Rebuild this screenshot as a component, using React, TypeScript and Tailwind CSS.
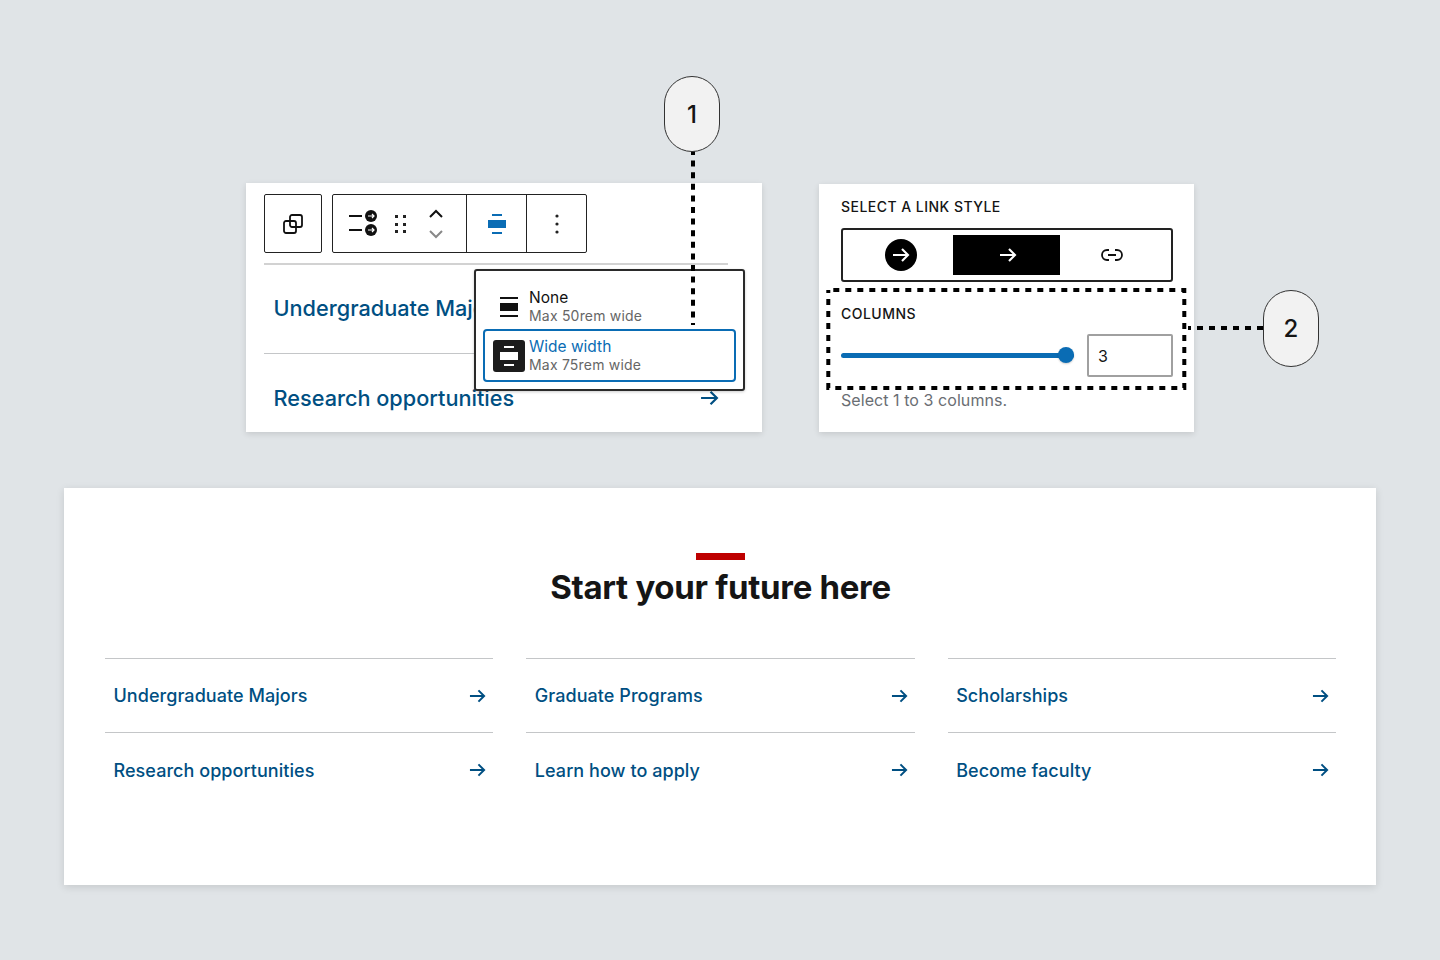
import React from 'react';

const links = [
  'Undergraduate Majors',
  'Graduate Programs',
  'Scholarships',
  'Research opportunities',
  'Learn how to apply',
  'Become faculty',
];

const Arrow = ({ className }: { className?: string }) => (
  <svg viewBox="0 0 18 16" fill="none" stroke="currentColor" strokeWidth="2.1" className={className}>
    <path d="M1 8h15M10 2l6 6-6 6" />
  </svg>
);

const LinkRow = ({ label }: { label: string }) => (
  <div className="flex h-[74.4px] items-center justify-between border-t border-[#c4c6c8] pl-[8.5px] pr-[7px]">
    <span className="text-[18px] font-medium tracking-[0.05px] text-[#004f82]">{label}</span>
    <Arrow className="h-[16px] w-[17px] text-[#004f82]" />
  </div>
);

const ToolbarIcons = () => (
  <svg viewBox="0 0 134 58" className="h-[58px] w-[134px]" fill="none">
    <path d="M16 21h13M16 35h13" stroke="#111" strokeWidth="2" />
    <circle cx="38" cy="21" r="6" fill="#111" />
    <circle cx="38" cy="35" r="6" fill="#111" />
    <path d="M35 21h6M39 19l2 2-2 2M35 35h6M39 33l2 2-2 2" stroke="#fff" strokeWidth="1.2" />
    <g fill="#222">
      <rect x="62" y="20" width="3" height="3" />
      <rect x="70" y="20" width="3" height="3" />
      <rect x="62" y="28" width="3" height="3" />
      <rect x="70" y="28" width="3" height="3" />
      <rect x="62" y="35" width="3" height="3" />
      <rect x="70" y="35" width="3" height="3" />
    </g>
    <path d="M97 22l6-6 6 6" stroke="#111" strokeWidth="2" />
    <path d="M97 36l6 6 6-6" stroke="#888" strokeWidth="2" />
  </svg>
);

const App: React.FC = () => {
  return (
    <div className="relative h-[960px] w-full overflow-hidden bg-[#e0e4e7] pt-[183px] font-[Inter,sans-serif] text-[#151515]">
      {/* Top panels */}
      <div className="flex items-start gap-[57px] pl-[246px]">
        {/* Block toolbar panel */}
        <div className="relative h-[249px] w-[516px] overflow-hidden bg-white px-[18px] pt-[11px] shadow-[0_2px_6px_rgba(0,0,0,0.12)]">
          <div className="flex gap-[10px]">
            <div className="flex h-[59px] w-[58px] items-center justify-center rounded-[2px] border border-[#222]">
              <svg viewBox="0 0 20 20" fill="none" stroke="#111" strokeWidth="1.8" className="h-[20px] w-[20px]">
                <rect x="1" y="7" width="12" height="12" rx="2" />
                <rect x="7" y="1" width="12" height="12" rx="2" />
              </svg>
            </div>
            <div className="flex h-[59px] w-[255px] rounded-[2px] border border-[#222]">
              <div className="w-[134px] border-r border-[#222]">
                <ToolbarIcons />
              </div>
              <div className="flex w-[60px] items-center justify-center border-r border-[#222]">
                <svg viewBox="0 0 18 20" className="h-[20px] w-[18px]" fill="#0a6cb4">
                  <rect x="4" y="0" width="10" height="2" />
                  <rect x="0" y="6" width="18" height="8" />
                  <rect x="4" y="18" width="10" height="2" />
                </svg>
              </div>
              <div className="flex flex-1 items-center justify-center">
                <svg viewBox="0 0 4 20" className="h-[20px] w-[4px]" fill="#222">
                  <circle cx="2" cy="2" r="1.6" />
                  <circle cx="2" cy="10" r="1.6" />
                  <circle cx="2" cy="18" r="1.6" />
                </svg>
              </div>
            </div>
          </div>
          <div className="mt-[10px] w-[464px] border-t-2 border-[#d2d2d2]" />
          <div className="flex h-[88px] items-center pb-[2px] pl-[9.5px] text-[21.7px] font-medium text-[#004f82]">
            Undergraduate Majors
          </div>
          <div className="w-[464px] border-t border-[#c4c6c8]" />
          <div className="flex h-[88px] items-center justify-between pl-[9.5px] pr-[25px] text-[21.7px] font-medium text-[#004f82]">
            <span>Research opportunities</span>
            <Arrow className="h-[18px] w-[19px]" />
          </div>

          {/* Width popover */}
          <div className="absolute left-[228px] top-[86px] h-[122px] w-[271px] rounded-[3px] border-2 border-[#2a2a2a] bg-white shadow-[0_1px_3px_rgba(0,0,0,0.2)]">
            <div className="flex h-[58px] items-center pl-[24px] pt-[14px]">
              <svg viewBox="0 0 18 20" className="h-[20px] w-[18px]" fill="#111">
                <rect x="0" y="0" width="18" height="2" />
                <rect x="0" y="6" width="18" height="8" />
                <rect x="0" y="18" width="18" height="2" />
              </svg>
              <div className="ml-[11px] leading-[18px]">
                <div className="text-[15.5px] text-[#111]">None</div>
                <div className="text-[14px] tracking-[0.2px] text-[#666]">Max 50rem wide</div>
              </div>
            </div>
            <div className="mx-[7px] flex h-[53px] items-center rounded-[4px] border-2 border-[#0a6cb4] pl-[8px]">
              <div className="flex h-[32px] w-[32px] items-center justify-center rounded-[3px] bg-[#1c1c1c]">
                <svg viewBox="0 0 18 20" className="h-[20px] w-[18px]" fill="#fff">
                  <rect x="4" y="0" width="10" height="2" />
                  <rect x="0" y="6" width="18" height="8" />
                  <rect x="4" y="18" width="10" height="2" />
                </svg>
              </div>
              <div className="ml-[4px] pt-[1px] leading-[18px]">
                <div className="text-[15.5px] text-[#0a6cb4]">Wide width</div>
                <div className="text-[14px] tracking-[0.2px] text-[#666]">Max 75rem wide</div>
              </div>
            </div>
          </div>
        </div>

        {/* Link style panel */}
        <div className="mt-[1px] h-[248px] w-[375px] bg-white px-[22px] pt-[14px] shadow-[0_2px_6px_rgba(0,0,0,0.12)]">
          <div className="text-[14px] font-medium leading-[18px] tracking-[0.47px] text-[#151515]">SELECT A LINK STYLE</div>
          <div className="mt-[12px] flex h-[54px] w-[332px] items-center rounded-[3px] border-2 border-[#222] pl-[42px]">
            <div className="flex h-[32px] w-[32px] items-center justify-center rounded-full bg-black text-white">
              <Arrow className="h-[16px] w-[18px]" />
            </div>
            <div className="ml-[36px] flex h-[40px] w-[107px] items-center justify-center bg-black pl-[3px] text-white">
              <Arrow className="h-[16px] w-[18px]" />
            </div>
            <svg viewBox="0 0 24 14" fill="none" stroke="#111" strokeWidth="1.8" className="ml-[40px] h-[14px] w-[24px]">
              <path d="M9 2H7a5 5 0 0 0 0 10h2M15 2h2a5 5 0 0 1 0 10h-2M8 7h8" />
            </svg>
          </div>
          <div className="mt-[23px] text-[14px] font-medium leading-[18px] tracking-[0.47px] text-[#151515]">COLUMNS</div>
          <div className="mt-[11px] flex items-center">
            <div className="relative h-[5px] w-[233px] shrink-0 rounded-full bg-[#0a6cb4]">
              <div className="absolute right-0 top-[-6px] h-[16px] w-[16px] rounded-full bg-[#0a6cb4] shadow-[0_1px_2px_rgba(0,0,0,0.2)]" />
            </div>
            <div className="ml-[13px] flex h-[43px] w-[85.5px] shrink-0 items-center rounded-[2px] border-2 border-[#a0a0a0] pl-[9px] text-[16px]">3</div>
          </div>
          <div className="mt-[13px] text-[16px] leading-[20px] tracking-[0.06px] text-[#6a6e73]">Select 1 to 3 columns.</div>
        </div>
      </div>

      {/* Rendered block */}
      <div className="mx-[64px] mt-[56px] h-[397px] bg-white pl-[41px] pr-[40px] pt-[65px] shadow-[0_2px_8px_rgba(0,0,0,0.12)]">
        <div className="mx-auto h-[7px] w-[49px] bg-[#be0000]" />
        <h2 className="mt-[6px] text-center text-[33px] font-bold leading-[42px] tracking-[-0.3px] text-[#151515]">Start your future here</h2>
        <div className="mt-[50px] grid grid-cols-3 gap-x-[33px]">
          {links.map((label) => (
            <LinkRow key={label} label={label} />
          ))}
        </div>
      </div>

      {/* Annotations */}
      <svg className="pointer-events-none absolute left-0 top-0 h-[960px] w-[1440px]" fill="none" stroke="#000" strokeWidth="4" strokeDasharray="6 6">
        <path d="M693 149V325" strokeDasharray="6 5.6" />
        <path d="M1188 328H1263" strokeDashoffset="3" />
        <rect x="828.3" y="290" width="356" height="98" strokeDashoffset="7" />
      </svg>
      <div className="absolute left-[664px] top-[76px] flex h-[76px] w-[56px] items-center justify-center rounded-full border-[1.5px] border-[#333] bg-[#f2f2f2] pt-[2px] text-[24px] font-medium">1</div>
      <div className="absolute left-[1263px] top-[290px] flex h-[77px] w-[56px] items-center justify-center rounded-full border-[1.5px] border-[#333] bg-[#f2f2f2] text-[24px] font-medium">2</div>
    </div>
  );
};

export default App;
